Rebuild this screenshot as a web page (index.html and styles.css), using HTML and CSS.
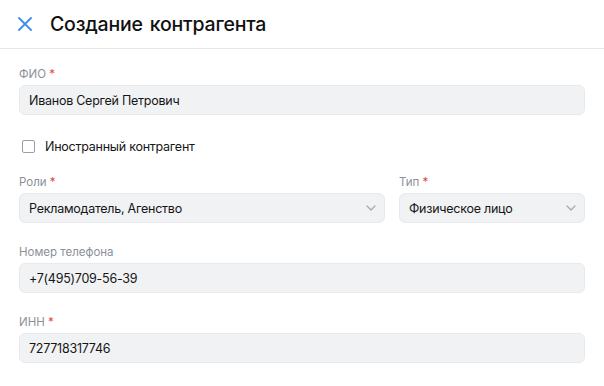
FILE: index.html
```html
<!DOCTYPE html>
<html lang="ru">
<head>
    <meta charset="UTF-8">
    <meta name="viewport" content="width=device-width, initial-scale=1.0">
    <title>Создание контрагента</title>
    <link rel="stylesheet" href="styles.css">
</head>
<body>
    <div class="header">
        <button class="close-btn" aria-label="Закрыть">
            <svg width="14" height="14" viewBox="0 0 14 14">
                <path d="M1 1L13 13M13 1L1 13" stroke="#3d8bf0" stroke-width="1.8" stroke-linecap="round"/>
            </svg>
        </button>
        <h1>Создание контрагента</h1>
    </div>

    <form class="form">
        <div class="field">
            <label class="label">ФИО <span class="req">*</span></label>
            <div class="input">Иванов Сергей Петрович</div>
        </div>

        <label class="checkbox-row">
            <span class="checkbox"></span>
            Иностранный контрагент
        </label>

        <div class="row">
            <div class="field">
                <label class="label">Роли <span class="req">*</span></label>
                <div class="input select">
                    Рекламодатель, Агенство
                    <svg class="chevron" width="10" height="6" viewBox="0 0 10 6">
                        <path d="M1 1L5 5L9 1" stroke="#a3a8b0" stroke-width="1.2" fill="none" stroke-linecap="round" stroke-linejoin="round"/>
                    </svg>
                </div>
            </div>
            <div class="field">
                <label class="label">Тип <span class="req">*</span></label>
                <div class="input select">
                    Физическое лицо
                    <svg class="chevron" width="10" height="6" viewBox="0 0 10 6">
                        <path d="M1 1L5 5L9 1" stroke="#a3a8b0" stroke-width="1.2" fill="none" stroke-linecap="round" stroke-linejoin="round"/>
                    </svg>
                </div>
            </div>
        </div>

        <div class="field">
            <label class="label">Номер телефона</label>
            <div class="input">+7(495)709-56-39</div>
        </div>

        <div class="field">
            <label class="label">ИНН <span class="req">*</span></label>
            <div class="input">727718317746</div>
        </div>
    </form>
</body>
</html>
```

FILE: styles.css
```css
body {
    font-family: Inter, "Noto Sans", sans-serif;
    margin: 0;
    background-color: #fff;
    color: #161616;
}
.header {
    display: flex;
    align-items: center;
    height: 48px;
    padding: 0 17px;
    border-bottom: 1px solid #e6e7ea;
}
.close-btn {
    background: none;
    border: none;
    padding: 0;
    margin: 0 18px 0 0;
    width: 15px;
    height: 15px;
    display: flex;
    align-items: center;
    justify-content: center;
    cursor: pointer;
}
h1 {
    margin: 0;
    font-size: 19.5px;
    font-weight: 500;
    letter-spacing: -0.2px;
    color: #111;
    word-spacing: 2px;
}
.form {
    padding: 17px 19px 0;
}
.field {
    display: flex;
    flex-direction: column;
    margin-bottom: 21px;
}
.label {
    font-size: 11.5px;
    line-height: 16px;
    color: #8b9099;
    margin-bottom: 3px;
}
.req {
    color: #e5484d;
}
.input {
    height: 30px;
    box-sizing: border-box;
    padding: 0 8px 0 9px;
    display: flex;
    align-items: center;
    background-color: #f1f2f4;
    border: 1px solid #e8e9ec;
    border-radius: 6px;
    font-size: 12.5px;
    letter-spacing: -0.25px;
}
.select {
    justify-content: space-between;
}
.checkbox-row {
    display: flex;
    align-items: center;
    height: 20px;
    margin: 0 0 18px 3px;
    font-size: 12.5px;
    letter-spacing: -0.25px;
}
.checkbox {
    width: 11px;
    height: 11px;
    border: 1px solid #9a9ea6;
    border-radius: 2px;
    margin-right: 10px;
}
.row {
    display: grid;
    grid-template-columns: 1fr 186px;
    gap: 14px;
}
```
